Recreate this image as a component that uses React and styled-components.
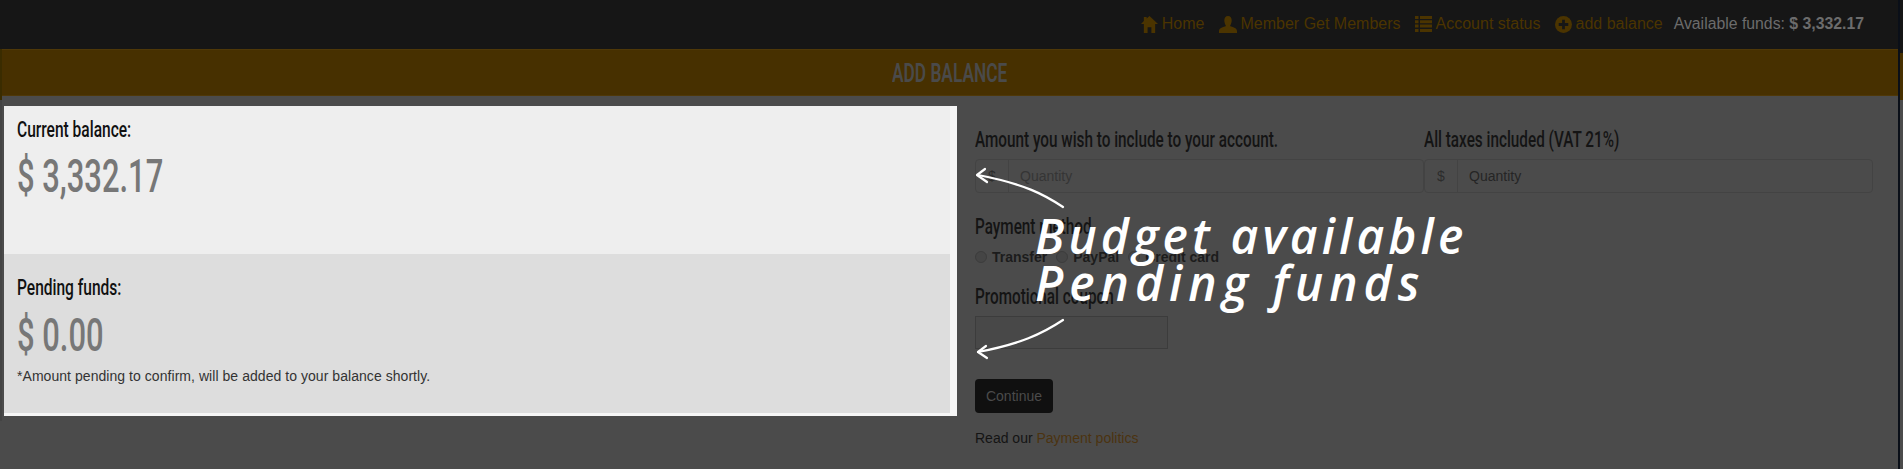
import React from 'react';
import styled, { createGlobalStyle } from 'styled-components';

const Global = createGlobalStyle`
  html, body { margin: 0; padding: 0; background: #4b4b4b; overflow: hidden; }
  body { font-family: "Liberation Sans", Arial, sans-serif; font-size: 14px; }
`;
const cond = `"Roboto", "Liberation Sans", sans-serif`;
const hand = `"Open Sans", "DejaVu Sans", sans-serif`;

const Page = styled.div`position: relative; width: 1903px; height: 469px; overflow: hidden; background: #4b4b4b;`;
const TopBar = styled.header`
  height: 49px; background: #161616; display: flex; justify-content: flex-end; align-items: center;
  gap: 14px; padding: 0 39px 1px 0; box-sizing: border-box;
`;
const NavLink = styled.a`display: inline-flex; align-items: center; gap: 4px; color: #4b3400; font-size: 16px;`;
const Funds = styled.span`color: #6c6c6c; font-size: 15.800px; margin-left: -3px; b { font-weight: 700; }`;
const TitleBar = styled.div`
  height: 47px; margin-left: 2px; padding-right: 5px; background: #473000; border-top: 1px solid #4f3808; border-bottom: 1px solid #4f3808;
  box-sizing: border-box; display: flex; align-items: center; justify-content: center;
`;
const Title = styled.h1`margin: 0; font: 600 26px ${cond}; color: #4a4a4a; transform: scaleX(.665);`;
const Main = styled.main`display: grid; grid-template-columns: 957px 1fr; padding-top: 10px;`;
const Highlight = styled.section`
  margin-left: 4px; height: 310px; box-sizing: border-box; padding-right: 7px; padding-bottom: 3px;
  background: #f6f6f6; display: flex; flex-direction: column;
`;
const Panel = styled.div`
  height: ${p => p.$h}px; box-sizing: border-box; padding: ${p => p.$top}px 0 0 13px; background: ${p => p.$bg};
`;
const PanelLabel = styled.div`font: 500 22.500px/26px ${cond}; color: #111; transform: scaleX(.69); transform-origin: left center;`;
const Amount = styled.div`font: 500 46.500px/52px ${cond}; color: #777; margin-top: ${p => p.$m}px; transform: scaleX(.665); transform-origin: left center;`;
const Note = styled.div`font-size: 14px; line-height: 18px; color: #333; margin-top: 6px; letter-spacing: .05px;`;
const Form = styled.div`padding: 20px 0 0 18px; width: 898px;`;
const FieldRow = styled.div`display: grid; grid-template-columns: 449px 449px;`;
const Label = styled.div`font: 500 22.500px/26px ${cond}; color: #141414; transform: scaleX(.68); transform-origin: left center;`;
const InputGroup = styled.div`
  margin-top: 7px; height: 34px; box-sizing: border-box; border: 1px solid #434343; border-radius: 4px;
  display: flex; align-items: center; color: #2c2c2c; font-size: 14px;
`;
const Addon = styled.span`width: 32px; text-align: center; height: 100%; line-height: 32px; border-right: 1px solid #434343;`;
const Quantity = styled.span`padding-left: 11px; color: ${p => p.$c};`;
const Section = styled.div`margin-top: ${p => p.$m}px;`;
const Radios = styled.div`display: flex; align-items: center; gap: 9px; margin-top: 9px; height: 18px; font-size: 14px; font-weight: 700; color: #1c1c1c;`;
const Radio = styled.span`display: inline-block; width: 12px; height: 12px; box-sizing: border-box; border-radius: 50%; border: 1px solid #3c3c3c; background: #454545;`;
const RadioItem = styled.span`display: inline-flex; align-items: center; gap: 5px;`;
const Coupon = styled.div`margin-top: 7px; width: 193px; height: 33px; box-sizing: border-box; border: 1px solid #3c3c3c; background: #484848;`;
const Button = styled.button`
  display: block; margin-top: 30px; width: 78px; height: 34px; border: 0; border-radius: 4px;
  background: #101010; color: #4b4b4b; font: 14px "Liberation Sans", sans-serif;
`;
const Policy = styled.p`margin: 16px 0 0; font-size: 14px; line-height: 18px; color: #141414; a { color: #4b3310; }`;
const Scribble = styled.div`
  position: absolute; left: 1035px; top: ${p => p.$t}px; color: #fff; font: italic 600 48px/50px ${hand};
  letter-spacing: ${p => p.$ls}px; white-space: nowrap;
`;
const Arrow = styled.svg`position: absolute; left: 970px; top: ${p => p.$t}px; overflow: visible;`;
const LeftEdge = styled.div`
  position: absolute; left: 0; top: 49px; width: 2px; height: 372px;
  background: linear-gradient(#3a2c00 51px, #444 51px);
`;
const RightEdge = styled.div`
  position: absolute; left: 1898px; top: 0; height: 469px; width: 5px; box-sizing: border-box;
  border-left: 2px solid #0a0f18;
  background: linear-gradient(#161616 53px, #473000 53px, #473000 100px, #4b4b4b 100px);
`;

const Home = () => <svg width="17" height="17" viewBox="0 0 18 18" fill="#4b3400"><path d="M9 0 6 2.700V1H3v4.400L0 8.500h3V18h4v-6h4v6h4V8.500h3z" /></svg>;
const User = () => <svg width="18" height="17" viewBox="0 0 18 17" fill="#4b3400"><path d="M9 0c2.500 0 3.700 2 3.700 4.300S11.700 9 11 10c2.500 1 7 2 7 5v2H0v-2c0-3 4.500-4 7-5C6.300 9 5.300 6.600 5.300 4.300S6.500 0 9 0z" /></svg>;
const List = () => <svg width="17" height="16" viewBox="0 0 17 16" fill="#4b3400"><path d="M0 0h3.500v3H0zM5 0h12v3H5zM0 4.300h3.500v3H0zM5 4.300h12v3H5zM0 8.600h3.500v3H0zM5 8.600h12v3H5zM0 12.900h3.500v3H0zM5 12.900h12v3H5z" /></svg>;
const Plus = () => <svg width="17" height="17" viewBox="0 0 16 16"><circle cx="8" cy="8" r="8" fill="#4b3400" /><path d="M6.700 3.500h2.600v3.200h3.200v2.600H9.300v3.200H6.700V9.300H3.500V6.700h3.200z" fill="#161616" /></svg>;

export default function App() {
  return (
    <Page>
      <Global />
      <TopBar>
        <NavLink><Home />Home</NavLink>
        <NavLink><User />Member Get Members</NavLink>
        <NavLink><List />Account status</NavLink>
        <NavLink><Plus />add balance</NavLink>
        <Funds>Available funds: <b>$ 3,332.17</b></Funds>
      </TopBar>
      <TitleBar><Title>ADD BALANCE</Title></TitleBar>
      <Main>
        <Highlight>
          <Panel $h={148} $top={10} $bg="#eeeeee">
            <PanelLabel>Current balance:</PanelLabel>
            <Amount $m={8}>$ 3,332.17</Amount>
          </Panel>
          <Panel $h={159} $top={20} $bg="#dddddd">
            <PanelLabel>Pending funds:</PanelLabel>
            <Amount $m={9}>$ 0.00</Amount>
            <Note>*Amount pending to confirm, will be added to your balance shortly.</Note>
          </Panel>
        </Highlight>
        <Form>
          <FieldRow>
            <div>
              <Label>Amount you wish to include to your account.</Label>
              <InputGroup><Addon>$</Addon><Quantity $c="#353535">Quantity</Quantity></InputGroup>
            </div>
            <div>
              <Label>All taxes included (VAT 21%)</Label>
              <InputGroup><Addon>$</Addon><Quantity $c="#252525">Quantity</Quantity></InputGroup>
            </div>
          </FieldRow>
          <Section $m={20}>
            <Label>Payment method</Label>
            <Radios>
              <RadioItem><Radio />Transfer</RadioItem>
              <RadioItem><Radio />PayPal</RadioItem>
              <RadioItem><Radio />Credit card</RadioItem>
            </Radios>
          </Section>
          <Section $m={17}>
            <Label>Promotional coupon</Label>
            <Coupon />
          </Section>
          <Button>Continue</Button>
          <Policy>Read our <a>Payment politics</a></Policy>
        </Form>
      </Main>
      <LeftEdge />
      <RightEdge />
      <Arrow $t={165} width="96" height="45" viewBox="0 0 96 45" fill="none" stroke="#fff" strokeWidth="2.200" strokeLinecap="round" strokeLinejoin="round">
        <path d="M93 42C75 30 55 19 8 10" />
        <path d="M15 4 7 10l10 7" />
      </Arrow>
      <Arrow $t={315} width="96" height="48" viewBox="0 0 96 48" fill="none" stroke="#fff" strokeWidth="2.200" strokeLinecap="round" strokeLinejoin="round">
        <path d="M93 5C72 19 50 29 8 37" />
        <path d="M16 31 8 37l9 6" />
      </Arrow>
      <Scribble $t={211} $ls={4.100}>Budget available</Scribble>
      <Scribble $t={258} $ls={6}>Pending funds</Scribble>
    </Page>
  );
}
